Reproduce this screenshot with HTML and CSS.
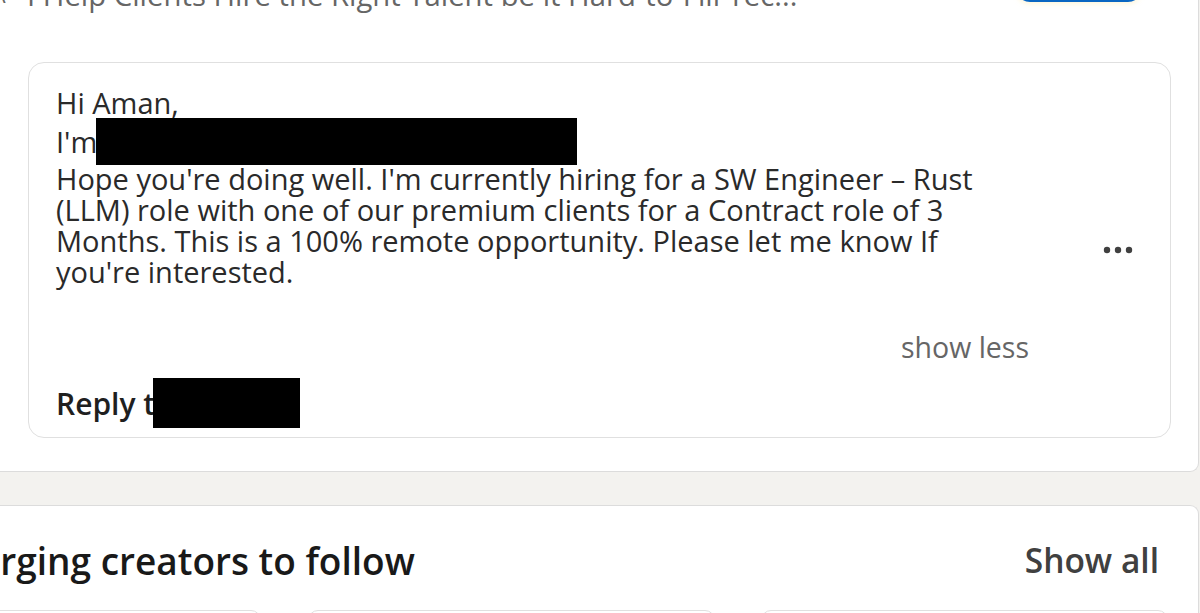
FILE: index.html
```html
<!DOCTYPE html>
<html lang="en">
<head>
<meta charset="utf-8">
<title>Message</title>
<link rel="stylesheet" href="styles.css">
</head>
<body>
<div class="page">
  <section class="panel panel-top">
    <div class="headline-row">
      <span class="chev">/</span>
      <span class="headline">I Help Clients Hire the Right Talent be it Hard-to-Fill Tec...</span>
      <span class="btn-blue"></span>
    </div>
    <div class="msg-card">
      <div class="msg-col">
        <div class="line">Hi Aman,</div>
        <div class="line line-im"><span>I'm</span><span class="redact redact-name"></span></div>
        <div class="body">Hope you're doing well. I'm currently hiring for a SW Engineer – Rust<br>(LLM) role with one of our premium clients for a Contract role of 3<br>Months. This is a 100% remote opportunity. Please let me know If<br>you're interested.</div>
        <div class="show-less">show less</div>
        <div class="reply-row"><span class="reply">Reply t</span><span class="redact redact-reply"></span></div>
      </div>
      <div class="more" aria-label="More options">
        <svg width="30" height="8" viewBox="0 0 30 8"><circle cx="4" cy="4" r="3.2" fill="#404040"/><circle cx="15" cy="4" r="3.2" fill="#404040"/><circle cx="26" cy="4" r="3.2" fill="#404040"/></svg>
      </div>
    </div>
  </section>
  <section class="panel panel-bottom">
    <div class="creators-head">
      <h2 class="creators-title">Emerging creators to follow</h2>
      <span class="show-all">Show all</span>
    </div>
    <div class="creator-cards">
      <div class="creator-card c1"></div>
      <div class="creator-card c2"></div>
      <div class="creator-card c3"></div>
    </div>
  </section>
</div>
</body>
</html>
```

FILE: styles.css
```css
* { box-sizing: border-box; }
html, body { margin: 0; padding: 0; }
body {
  background: #f3f2ef;
  font-family: "Open Sans", "Noto Sans", "Liberation Sans", sans-serif;
  color: #1f1f1f;
  width: 1200px;
  height: 613px;
  overflow: hidden;
}
.page {
  display: flex;
  flex-direction: column;
  gap: 33px;
}
.panel {
  background: #fff;
  border: 1px solid #dcdcdc;
  margin-left: -20px;
  margin-right: 1px;
}
.panel-top {
  border-top: none;
  border-radius: 0 0 9px 9px;
  margin-top: -25px;
  padding: 0 0 33px 20px;
}
.headline-row {
  display: flex;
  align-items: flex-end;
  height: 36px;
  padding-right: 56px;
}
.chev {
  color: #666;
  font-size: 24px;
  line-height: 31px;
  width: 30px;
  margin-left: -4px;
  transform: scaleY(-1);
}
.headline {
  color: #666;
  font-size: 29.3px;
  line-height: 31px;
  white-space: nowrap;
  flex: 1;
}
.btn-blue {
  align-self: flex-start;
  width: 126px;
  height: 27px;
  border: 3px solid #0a66c2;
  border-radius: 0 0 14px 14px;
  box-shadow: 0 2px 5px rgba(255, 230, 150, 0.35);
}
.msg-card {
  margin-top: 51px;
  margin-left: 27px;
  width: 1143px;
  height: 376px;
  border: 1px solid #e0e0e0;
  border-radius: 16px;
  display: flex;
  align-items: center;
  padding: 0 0 0 27px;
}
.msg-col {
  width: 973px;
  align-self: stretch;
  display: flex;
  flex-direction: column;
  padding: 24px 0 9px;
  font-size: 29px;
  line-height: 31px;
  color: #2a2a2a;
}
.body { margin-top: -2px; }
.line-im {
  display: flex;
  align-items: center;
  height: 47px;
  gap: 0;
}
.redact { background: #000; display: inline-block; }
.redact-name { width: 481px; height: 47px; margin-left: -1px; }
.show-less {
  align-self: flex-end;
  color: #666;
  font-size: 28.5px;
  margin-top: 45px;
}
.reply-row {
  margin-top: 15px;
  display: flex;
  align-items: center;
  height: 50px;
}
.reply {
  font-weight: 600;
  color: #1f1f1f;
  font-size: 30px;
}
.redact-reply { width: 147px; height: 50px; margin-left: -2px; }
.more {
  margin-left: auto;
  margin-right: 37px;
  display: flex;
}
.panel-bottom {
  border-bottom: none;
  border-radius: 9px 9px 0 0;
  flex: 1;
  overflow: hidden;
  padding: 0 39px 0 0;
}
.creators-head {
  display: flex;
  align-items: center;
  justify-content: space-between;
  height: 104px;
  padding-top: 4px;
}
.creators-title {
  margin: 0 0 0 -58px;
  font-size: 37px;
  font-weight: 600;
  color: #191919;
  white-space: nowrap;
}
.show-all {
  font-size: 33.5px;
  font-weight: 600;
  color: #404040;
}
.creator-cards {
  display: flex;
}
.creator-card {
  flex-shrink: 0;
  height: 60px;
  border: 1px solid #e0e0e0;
  border-radius: 10px 10px 0 0;
}
.c1 { width: 280px; }
.c2 { width: 407px; margin-left: 47px; }
.c3 { width: 407px; margin-left: 46px; }
```
